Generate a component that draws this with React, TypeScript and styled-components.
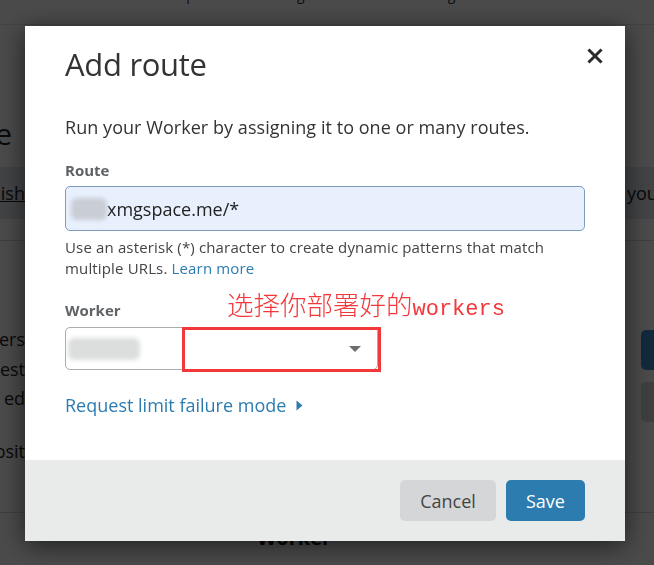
import React from "react";
import styled, { createGlobalStyle } from "styled-components";

const Global = createGlobalStyle`
  html, body { margin: 0; padding: 0; overflow: hidden; }
  body { font-family: "Open Sans", "Noto Sans", sans-serif; background: #ffffff; }
  * { box-sizing: border-box; }
`;

/* ---------- background page ---------- */
const Page = styled.div`
  width: 654px;
  height: 565px;
  background: #ffffff;
  color: #222;
  display: flex;
  flex-direction: column;
`;

const Nav = styled.nav`
  height: 25px;
  display: flex;
  gap: 34px;
  padding-left: 17px;
  align-items: flex-start;
  overflow: hidden;
  border-bottom: 1px solid #e4e4e4;
`;

const Tab = styled.span<{ $active?: boolean }>`
  margin-top: -13px;
  font-size: 14px;
  line-height: 16px;
  white-space: nowrap;
  color: #333;
  font-weight: ${(p) => (p.$active ? 700 : 400)};
`;

const Row = styled.div<{ $h: number; $tint?: boolean; $line?: boolean }>`
  height: ${(p) => p.$h}px;
  display: flex;
  justify-content: space-between;
  align-items: center;
  background: ${(p) => (p.$tint ? "#dfe6ee" : "transparent")};
  border-bottom: ${(p) => (p.$line ? "1px solid #d8d8d8" : "none")};
`;

const LeftSnip = styled.div<{ $size?: number; $link?: boolean; $trim?: number }>`
  width: 25px;
  overflow: hidden;
  white-space: nowrap;
  direction: rtl;
  text-align: left;
  padding-right: ${(p) => p.$trim ?? 0}px;
  font-size: ${(p) => p.$size ?? 18}px;
  text-decoration: ${(p) => (p.$link ? "underline" : "none")};
  color: #222;
`;

const Heading = styled(LeftSnip)`
  margin-bottom: 14px;
`;

const RightSnip = styled.div<{ $size?: number }>`
  width: 27px;
  overflow: hidden;
  white-space: nowrap;
  font-size: ${(p) => p.$size ?? 18}px;
  color: #222;
`;

const Section = styled.div`
  height: 272px;
  display: flex;
  justify-content: space-between;
  border-bottom: 1px solid #d8d8d8;
`;

const SectionLines = styled.div`
  display: flex;
  flex-direction: column;
  padding-top: 84px;
`;

const SnipLine = styled(LeftSnip)<{ $gap?: number }>`
  line-height: 29.5px;
  margin-top: ${(p) => p.$gap ?? 0}px;
`;

const SideButtons = styled.div`
  width: 13px;
  padding-top: 89px;
  display: flex;
  flex-direction: column;
  gap: 12px;
`;

const SideButton = styled.div<{ $primary?: boolean }>`
  height: 40px;
  border-radius: 5px 0 0 5px;
  background: ${(p) => (p.$primary ? "#3f8fd0" : "#d5d6d8")};
`;

const FooterTitle = styled.div`
  margin-top: 10px;
  text-align: center;
  padding-right: 66px;
  font-size: 20px;
  font-weight: 700;
  line-height: 30px;
  color: #111;
`;

/* ---------- overlay + modal ---------- */
const Overlay = styled.div`
  position: fixed;
  inset: 0;
  background: rgba(0, 0, 0, 0.71);
  display: flex;
  align-items: flex-start;
  padding: 26px 0 0 25px;
`;

const Modal = styled.div`
  width: 600px;
  height: 515px;
  background: #ffffff;
  box-shadow: 0 4px 24px rgba(0, 0, 0, 0.6);
  display: flex;
  flex-direction: column;
  font-family: "Open Sans", "Noto Sans", sans-serif;
`;

const Body = styled.div`
  flex: 1;
  padding: 18px 40px 0 40px;
  display: flex;
  flex-direction: column;
`;

const Header = styled.div`
  display: flex;
  justify-content: space-between;
  align-items: flex-start;
`;

const Title = styled.h2`
  margin: 0;
  font-size: 31px;
  line-height: 40px;
  font-weight: 400;
  color: #333;
  letter-spacing: -0.3px;
`;

const CloseButton = styled.button`
  margin: 0 -22px 0 0;
  width: 24px;
  height: 24px;
  padding: 0;
  border: 0;
  background: transparent;
  display: flex;
  align-items: center;
  justify-content: center;
  cursor: pointer;
`;

const Description = styled.p`
  margin: 31px 0 0 0;
  font-size: 18px;
  line-height: 24px;
  color: #333;
  letter-spacing: 0.05px;
`;

const Label = styled.div<{ $mt: number }>`
  margin-top: ${(p) => p.$mt}px;
  font-size: 15px;
  line-height: 20px;
  font-weight: 700;
  color: #5f6366;
`;

const Input = styled.div`
  margin-top: 6px;
  height: 45px;
  border: 1px solid #7c9bbd;
  border-radius: 5px;
  background: #e8f0fe;
  display: flex;
  align-items: center;
  padding-left: 5px;
  font-size: 18px;
  color: #222;
`;

const Blur = styled.span<{ $w: number; $color: string }>`
  display: inline-block;
  width: ${(p) => p.$w}px;
  height: 22px;
  background: ${(p) => p.$color};
  filter: blur(2px);
  border-radius: 6px;
`;

const Help = styled.p`
  margin: 6px 0 0 0;
  font-size: 15px;
  line-height: 21px;
  color: #444;
  letter-spacing: 0.15px;
`;

const Link = styled.a`
  color: #2c7cb0;
  text-decoration: none;
`;

const Field = styled.div`
  position: relative;
  display: flex;
  flex-direction: column;
`;

const Select = styled.div`
  margin-top: 7px;
  width: 313px;
  height: 43px;
  border: 1px solid #ababab;
  border-radius: 5px;
  background: #fff;
  display: flex;
  align-items: center;
  justify-content: space-between;
  padding: 0 16px 0 2px;
`;

const Caret = styled.span`
  width: 0;
  height: 0;
  border-left: 6px solid transparent;
  border-right: 6px solid transparent;
  border-top: 6px solid #6b6e71;
`;

const Annotation = styled.div`
  position: absolute;
  left: 162px;
  top: 10px;
  color: #f2383a;
  white-space: nowrap;
  line-height: 30px;
  display: flex;
  align-items: baseline;
`;

const AnnoCJK = styled.span`
  font-family: "Noto Sans CJK SC", sans-serif;
  font-size: 26.5px;
  font-weight: 300;
`;

const AnnoLatin = styled.span`
  font-family: "Liberation Mono", monospace;
  font-size: 22px;
`;

const AnnoBox = styled.div`
  position: absolute;
  left: 117px;
  top: 48px;
  width: 199px;
  height: 45px;
  border: 3px solid #f2383a;
`;

const Toggle = styled.a`
  margin-top: 23px;
  display: flex;
  align-items: center;
  gap: 10px;
  font-size: 18px;
  line-height: 24px;
  color: #2c7cb0;
  text-decoration: none;
  cursor: pointer;
`;

const Footer = styled.div`
  height: 81px;
  background: #e9eaea;
  display: flex;
  justify-content: flex-end;
  align-items: center;
  gap: 10px;
  padding: 0 40px;
`;

const Button = styled.button<{ $primary?: boolean; $w: number }>`
  width: ${(p) => p.$w}px;
  height: 41px;
  padding: 0;
  border: 0;
  border-radius: 5px;
  font-family: "Open Sans", "Noto Sans", sans-serif;
  font-size: 18px;
  background: ${(p) => (p.$primary ? "#2c7cb0" : "#d5d6d8")};
  color: ${(p) => (p.$primary ? "#ffffff" : "#444")};
  cursor: pointer;
`;

export default function App() {
  return (
    <>
      <Global />
      <Page>
        <Nav>
          <Tab>Firewall</Tab>
          <Tab>Access</Tab>
          <Tab>Speed</Tab>
          <Tab>Caching</Tab>
          <Tab $active>Workers</Tab>
          <Tab>Page Rules</Tab>
          <Tab>Network</Tab>
          <Tab>Traffic</Tab>
        </Nav>
        <Row $h={88} />
        <Row $h={54}>
          <Heading $size={30} $trim={13}>Route</Heading>
        </Row>
        <Row $h={52} $tint>
          <LeftSnip $link>Publish</LeftSnip>
          <RightSnip>you</RightSnip>
        </Row>
        <Row $h={22} $line />
        <Section>
          <SectionLines>
            <SnipLine>Workers</SnipLine>
            <SnipLine>Request</SnipLine>
            <SnipLine>the ed</SnipLine>
            <SnipLine $gap={23}>Deposit</SnipLine>
          </SectionLines>
          <SideButtons>
            <SideButton $primary />
            <SideButton />
          </SideButtons>
        </Section>
        <FooterTitle>Worker</FooterTitle>
      </Page>

      <Overlay>
        <Modal role="dialog" aria-label="Add route">
          <Body>
            <Header>
              <Title>Add route</Title>
              <CloseButton aria-label="Close">
                <svg width="16" height="16" viewBox="0 0 16 16">
                  <path d="M2.5 2.5 L13.5 13.5 M13.5 2.5 L2.5 13.5" stroke="#2b2b2b" strokeWidth="3" strokeLinecap="square" />
                </svg>
              </CloseButton>
            </Header>
            <Description>Run your Worker by assigning it to one or many routes.</Description>
            <Label $mt={21}>Route</Label>
            <Input>
              <Blur $w={36} $color="#c9cdd4" />
              <span>xmgspace.me/*</span>
            </Input>
            <Help>
              Use an asterisk (*) character to create dynamic patterns that match multiple URLs.{" "}
              <Link href="#">Learn more</Link>
            </Help>
            <Field>
              <Label $mt={21}>Worker</Label>
              <Select>
                <Blur $w={72} $color="#dcdddd" />
                <Caret />
              </Select>
              <Annotation>
                <AnnoCJK>选择你部署好的</AnnoCJK>
                <AnnoLatin>workers</AnnoLatin>
              </Annotation>
              <AnnoBox />
            </Field>
            <Toggle href="#">
              Request limit failure mode
              <svg width="7" height="11" viewBox="0 0 7 11">
                <path d="M0.5 0.5 L6.5 5.5 L0.5 10.5 Z" fill="#2c7cb0" />
              </svg>
            </Toggle>
          </Body>
          <Footer>
            <Button $w={96}>Cancel</Button>
            <Button $w={79} $primary>Save</Button>
          </Footer>
        </Modal>
      </Overlay>
    </>
  );
}
